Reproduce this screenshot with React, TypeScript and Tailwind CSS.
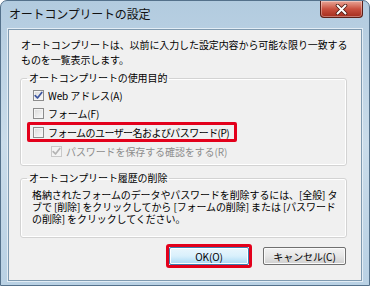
import React from 'react';

function CheckBox({ checked = false, disabled = false }: { checked?: boolean; disabled?: boolean }) {
  return (
    <span
      className={`flex h-[11px] w-[11px] shrink-0 items-center justify-center border ${
        disabled
          ? 'border-[#c9c9c9] bg-[#f3f3f3]'
          : 'border-[#8c8c8c] bg-gradient-to-br from-[#d9d9d9] to-[#fbfbfb] shadow-[inset_0_0_0_1px_#f4f4f4]'
      }`}
    >
      {checked && (
        <svg width="9" height="9" viewBox="0 0 9 9">
          <path
            d="M1.2 4.6 L3.5 7 L7.8 1.4"
            fill="none"
            stroke={disabled ? '#b4b4b4' : '#3d56a0'}
            strokeWidth="1.7"
            strokeLinecap="round"
            strokeLinejoin="round"
          />
        </svg>
      )}
    </span>
  );
}

export default function App() {
  return (
    <div className="flex h-[286px] w-[370px] flex-col overflow-hidden rounded-t-[7px] border border-[#54718b] bg-gradient-to-b from-[#b2cbdf] via-[#cadcea] to-[#b9d1e4] font-['Noto_Sans_CJK_JP','Noto_Sans',sans-serif] text-black">
      {/* title bar */}
      <div className="flex h-[28px] shrink-0 items-start justify-between">
        <span className="mt-[5px] ml-[8px] text-[12px] leading-[16px] tracking-[-0.2px] text-[#111]">
          オートコンプリートの設定
        </span>
        <button className="mr-[6px] flex h-[17px] w-[43px] items-center justify-center rounded-b-[4px] border border-t-0 border-[#5c1f17] bg-gradient-to-b from-[#e8a597] via-[#c9503f] to-[#a42d1d] shadow-[inset_0_0_0_1px_rgba(255,255,255,0.35)]">
          <svg width="13" height="11" viewBox="0 0 13 11">
            <path d="M2.5 1.5 L10.5 9.5 M10.5 1.5 L2.5 9.5" stroke="#4a1810" strokeWidth="3.6" strokeLinecap="round" />
            <path d="M2.5 1.5 L10.5 9.5 M10.5 1.5 L2.5 9.5" stroke="#ffffff" strokeWidth="2" strokeLinecap="round" />
          </svg>
        </button>
      </div>

      {/* client area */}
      <div className="mx-[7px] mb-[4px] flex flex-1 flex-col border border-[#7f9ab0] bg-[#f0f0f0] pt-[7px] pr-[14px] pl-[11px] shadow-[0_0_0_1px_#e3edf5] text-[10px] leading-[15px] tracking-[-0.1px]">
        <p className="ml-[1px] whitespace-nowrap">
          オートコンプリートは、以前に入力した設定内容から可能な限り一致する
          <br />
          ものを一覧表示します。
        </p>

        <fieldset className="mt-[4px] rounded-[3px] border border-[#d3d3d3] pt-[1px] pb-[5px] shadow-[inset_0_0_0_1px_#ffffff]">
          <legend className="ml-[6px] px-[2px] leading-[14px]">オートコンプリートの使用目的</legend>
          <div className="ml-[6px] flex h-[18px] w-[210px] items-center gap-[4px] border-[3px] border-transparent pl-[3px]">
            <CheckBox checked />
            <span>Web アドレス(A)</span>
          </div>
          <div className="ml-[6px] flex h-[18px] w-[210px] items-center gap-[4px] border-[3px] border-transparent pl-[3px]">
            <CheckBox />
            <span>フォーム(F)</span>
          </div>
          <div className="ml-[6px] flex h-[20px] w-[210px] items-center gap-[4px] rounded-[2px] border-[3px] border-[#e3001b] pl-[3px]">
            <CheckBox />
            <span className="whitespace-nowrap tracking-[-0.55px]">フォームのユーザー名およびパスワード(P)</span>
          </div>
          <div className="ml-[6px] flex h-[18px] items-center gap-[4px] border-[3px] border-transparent pl-[21px] text-[#8d8d8d]">
            <CheckBox checked disabled />
            <span className="whitespace-nowrap">パスワードを保存する確認をする(R)</span>
          </div>
        </fieldset>

        <fieldset className="mt-[5px] rounded-[3px] border border-[#d3d3d3] pt-[4px] pb-[12px] pl-[11px] shadow-[inset_0_0_0_1px_#ffffff]">
          <legend className="-ml-[5px] px-[2px] leading-[14px]">オートコンプリート履歴の削除</legend>
          <p className="whitespace-nowrap leading-[12px]">
            格納されたフォームのデータやパスワードを削除するには、[全般] タ
            <br />
            ブで [削除] をクリックしてから [フォームの削除] または [パスワード
            <br />
            の削除] をクリックしてください。
          </p>
        </fieldset>

        <div className="mt-[9px] flex justify-end gap-[14px] pr-[1px]">
          <div className="-m-[3px] rounded-[3px] border-[3px] border-[#e3001b]">
            <button className="flex h-[18px] w-[80px] items-center justify-center rounded-[2px] border border-[#3c7fb1] bg-gradient-to-b from-[#eaf6fd] via-[#d9f0fc] to-[#a7d9f5] text-[10px] shadow-[inset_0_0_0_1px_#ffffff]">
              OK(O)
            </button>
          </div>
          <button className="flex h-[18px] w-[83px] items-center justify-center rounded-[2px] border border-[#707070] bg-gradient-to-b from-[#f2f2f2] via-[#e6e6e6] to-[#cfcfcf] text-[10px] shadow-[inset_0_0_0_1px_#fafafa]">
            キャンセル(C)
          </button>
        </div>
      </div>
    </div>
  );
}
